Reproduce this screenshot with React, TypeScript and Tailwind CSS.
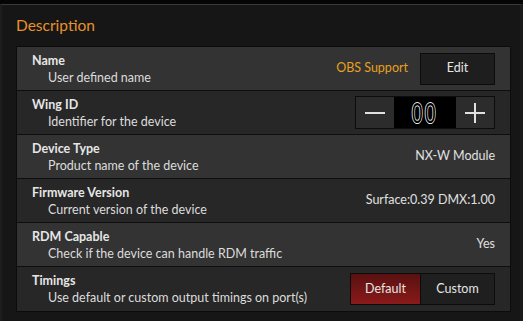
import React from "react";

const font = { fontFamily: 'Lato, "Noto Sans", sans-serif' };

function Row({
  label,
  sub,
  light,
  last,
  children,
}: {
  label: string;
  sub: string;
  light: boolean;
  last?: boolean;
  children?: React.ReactNode;
}) {
  return (
    <div
      className={`flex h-[44px] items-stretch justify-between ${
        light ? "bg-[#333333]" : "bg-[#272727]"
      } ${last ? "" : "border-b border-[#0e0e0e]"}`}
    >
      <div className="flex flex-col pl-[15px] pt-[6px]">
        <div className="text-[12.5px] font-bold leading-[16px] text-[#e6e6e6]">{label}</div>
        <div className="pl-[16px] text-[12.5px] leading-[17px] text-[#dcdcdc]">{sub}</div>
      </div>
      <div className="flex items-center pr-[15px]">{children}</div>
    </div>
  );
}

export default function App() {
  return (
    <div className="flex h-[321px] w-[523px] flex-col bg-black" style={font}>
      <div className="h-[4px] bg-[#050505]" />
      <div className="flex flex-1 flex-col border-t border-[#3a3a3a] border-l-2 border-l-[#1d1d1d] border-r-[3px] border-r-[#1b1b1b] bg-[#161616] pl-[14px] pr-[9px]">
        <div className="pt-[10px] text-[15.5px] leading-[21px] text-[#e8922c]">Description</div>
        <div className="mt-[10px] flex flex-col border border-[#0c0c0c]">
          <Row label="Name" sub="User defined name" light>
            <div className="flex items-center gap-[12px]">
              <span className="text-[12.5px] text-[#e8a01e]">OBS Support</span>
              <button className="flex h-[32px] w-[75px] items-center justify-center border border-[#0c0c0c] bg-[#1e1e1e] text-[12.5px] text-[#e6e6e6]">
                Edit
              </button>
            </div>
          </Row>
          <Row label="Wing ID" sub="Identifier for the device" light={false}>
            <div className="flex h-[33px] w-[140px] border border-[#0c0c0c]">
              <div className="flex w-[38px] items-center justify-center bg-[#2c2c2c]">
                <svg width="22" height="22" viewBox="0 0 22 22">
                  <line x1="1" y1="11" x2="21" y2="11" stroke="#e0e0e0" strokeWidth="2" />
                </svg>
              </div>
              <div className="flex flex-1 items-center justify-center bg-black">
                <span
                  className="inline-block scale-x-[0.66] text-[30px] leading-[30px] tracking-[3px] text-black [text-shadow:1px_0_0_#e6e6e6,-1px_0_0_#e6e6e6,0_1px_0_#e6e6e6,0_-1px_0_#e6e6e6]"
                  style={{ fontFamily: '"Liberation Sans", sans-serif' }}
                >
                  00
                </span>
              </div>
              <div className="flex w-[38px] items-center justify-center bg-[#2c2c2c]">
                <svg width="22" height="22" viewBox="0 0 22 22">
                  <line x1="1" y1="11" x2="21" y2="11" stroke="#e0e0e0" strokeWidth="2" />
                  <line x1="11" y1="1" x2="11" y2="21" stroke="#e0e0e0" strokeWidth="2" />
                </svg>
              </div>
            </div>
          </Row>
          <Row label="Device Type" sub="Product name of the device" light>
            <span className="text-[12.5px] text-[#e0e0e0]">NX-W Module</span>
          </Row>
          <Row label="Firmware Version" sub="Current version of the device" light={false}>
            <span className="text-[12.5px] text-[#e0e0e0]">Surface:0.39 DMX:1.00</span>
          </Row>
          <Row label="RDM Capable" sub="Check if the device can handle RDM traffic" light>
            <span className="text-[12.5px] text-[#e0e0e0]">Yes</span>
          </Row>
          <Row label="Timings" sub="Use default or custom output timings on port(s)" light={false} last>
            <div className="flex h-[32px] border border-[#0c0c0c]">
              <button className="flex w-[70px] items-center justify-center border-r border-[#0c0c0c] bg-gradient-to-b from-[#5a1010] to-[#8a1a1a] text-[12.5px] text-[#e6e6e6]">
                Default
              </button>
              <button className="flex w-[73px] items-center justify-center bg-[#1f1f1f] text-[12.5px] text-[#e6e6e6]">
                Custom
              </button>
            </div>
          </Row>
        </div>
      </div>
    </div>
  );
}
